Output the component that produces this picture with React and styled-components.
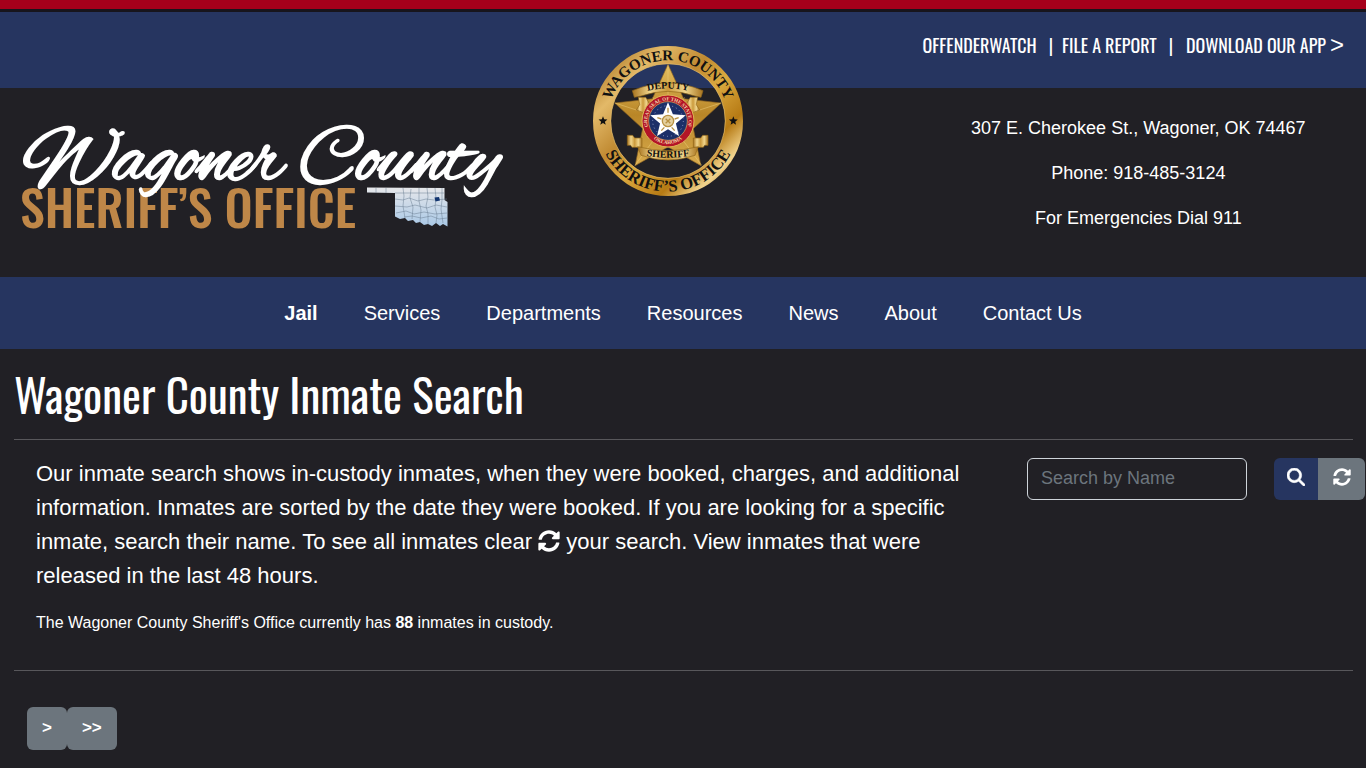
import styled, { createGlobalStyle } from "styled-components";
import { FaSyncAlt } from "react-icons/fa";
import { FaMagnifyingGlass } from "react-icons/fa6";

const GlobalStyle = createGlobalStyle`
  *,
  *::before,
  *::after {
    box-sizing: border-box;
  }

  :root {
    --color-dark: #212025;
    --color-blue: #263560;
    --color-red: #a5001b;
    --color-grey: #6c757d;
    --font-body: "Liberation Sans", Arial, sans-serif;
    --font-heading: Oswald, "Liberation Sans Narrow", "Arial Narrow", sans-serif;
  }

  body {
    margin: 0;
    background-color: var(--color-dark);
    color: #fff;
    font-family: var(--font-body);
    font-size: 16px;
    line-height: 24px;
    overflow-x: hidden;
  }
`;

const TopBar = styled.div`
  display: flex;
  justify-content: flex-end;
  height: 88px;
  padding: 21px 22px 0;
  border-top: 9px solid var(--color-red);
  background-color: var(--color-blue);
  box-shadow: inset 0 3px 0 #17151c;
`;

const TopLinks = styled.nav`
  display: flex;
  font-family: var(--font-heading);
  font-size: 18px;
  font-weight: 400;
  line-height: 30px;
  white-space: nowrap;
`;

const TopLink = styled.a`
  display: flex;
  gap: 4px;
  color: #fff;
  text-decoration: none;
`;

const Separator = styled.span`
  padding: 0 ${(props) => (props.$tight ? 9 : 13)}px 0 12px;
`;

const Chevron = styled.span`
  font-family: var(--font-body);
  font-size: 24px;
`;

const Brand = styled.div`
  display: grid;
  grid-template-columns: repeat(3, minmax(0, 1fr));
  min-height: 189px;
`;

const LogoLink = styled.a`
  padding: 32px 0 0 20px;

  & svg {
    display: block;
    overflow: visible;
  }
`;

const SealCell = styled.div`
  display: flex;
  justify-content: center;
  padding-right: 30px;

  & svg {
    margin-top: -42px;
  }
`;

const Contact = styled.address`
  padding-top: 25px;
  font-size: 18px;
  font-style: normal;
  line-height: 30px;
  text-align: center;

  & p {
    margin: 0 0 15px;
  }
`;

const MainNav = styled.nav`
  background-color: var(--color-blue);

  & ul {
    display: flex;
    flex-wrap: wrap;
    justify-content: center;
    gap: 0 46px;
    margin: 0;
    padding: 21px 0;
    list-style: none;
  }
`;

const NavLink = styled.a`
  color: #fff;
  font-size: 20px;
  font-weight: ${(props) => (props.$active ? 700 : 400)};
  line-height: 30px;
  text-decoration: none;
`;

const Title = styled.h1`
  margin: 0;
  padding: 16px 14px;
  font-family: var(--font-heading);
  font-size: 45px;
  font-weight: 400;
  line-height: 58px;
`;

const Divider = styled.hr`
  height: 1px;
  margin: 0 13px 0 14px;
  border: 0;
  background-color: #58575b;
`;

const SearchRow = styled.div`
  display: grid;
  grid-template-columns: minmax(0, 1fr) 339px;
  padding: 17px 0 35px;
`;

const Intro = styled.div`
  padding: 0 42px 0 36px;
`;

const Lead = styled.p`
  margin: 0 0 18px;
  font-size: 22px;
  line-height: 34px;

  & svg {
    vertical-align: -3px;
  }
`;

const Count = styled.p`
  margin: 0;
`;

const SearchForm = styled.form`
  display: flex;
  align-items: flex-start;
  padding: 1px 1px 0 0;
`;

const SearchInput = styled.input`
  flex: 1;
  min-width: 0;
  height: 42px;
  margin-right: 27px;
  padding: 0 13px 2px;
  border: 1px solid #ced4da;
  border-radius: 6px;
  background-color: var(--color-dark);
  color: #fff;
  font-family: inherit;
  font-size: 18px;

  &::placeholder {
    color: var(--color-grey);
    opacity: 1;
  }
`;

const IconButton = styled.button`
  display: flex;
  justify-content: center;
  width: ${(props) => (props.$secondary ? 47 : 44)}px;
  height: 42px;
  padding: 10px 0 0;
  border: 0;
  border-radius: ${(props) =>
    props.$secondary ? "0 6px 6px 0" : "6px 0 0 6px"};
  background-color: ${(props) =>
    props.$secondary ? "var(--color-grey)" : "var(--color-blue)"};
  color: #fff;
  font-size: 18px;
`;

const Pager = styled.div`
  display: flex;
  padding: 36px 27px 18px;
`;

const PageButton = styled.button`
  height: 43px;
  padding: 0 15px 2px;
  border: 0;
  border-radius: 6px;
  background-color: var(--color-grey);
  color: #fff;
  font-family: inherit;
  font-size: 17px;
  font-weight: 700;
  line-height: 24px;
`;

const navItems = [
  "Jail",
  "Services",
  "Departments",
  "Resources",
  "News",
  "About",
  "Contact Us",
];

function star(cx, cy, outer, inner) {
  return Array.from({ length: 10 }, (_, i) => {
    const r = i % 2 ? inner : outer;
    const a = (Math.PI / 5) * i - Math.PI / 2;
    return `${(cx + r * Math.cos(a)).toFixed(1)},${(cy + r * Math.sin(a)).toFixed(1)}`;
  }).join(" ");
}

function Logo() {
  return (
    <svg
      width="484"
      height="120"
      viewBox="20 120 484 120"
      role="img"
      aria-label="Wagoner County Sheriff's Office"
    >
      <defs>
        <linearGradient id="state" x1="0" y1="0" x2="0" y2="1">
          <stop offset="0" stopColor="#e6e7ea" />
          <stop offset="1" stopColor="#a9c8e6" />
        </linearGradient>
      </defs>
      <text
        x="20"
        y="228"
        fill="#bf8748"
        fontFamily="Oswald, 'Liberation Sans Narrow', sans-serif"
        fontSize="50"
        fontWeight="500"
      >
        SHERIFF’S OFFICE
      </text>
      <path
        d="M367 187.500 L444.500 188 V200 L447.500 202 V226.500 L443 224 L440 226 L436 223 L432 226 L428 224 L424 225 L420 222 L416 223 L413 220 L408 221 L405 218 L400 219 L395 216.500 V193 L367 192.500 Z"
        fill="url(#state)"
      />
      <path
        d="M376 188v5M386 188v5M395 193h49M395 199l8 1 6-2 9 3 8-2 8 1 13-1M395 206l12 1 8-2 12 3 9-3 11 2M396 213l10-2 8 3 10-2 11 2 12-1M403 188l1 8-1 10 2 12M411 189l-1 9 3 9-1 12M419 188v13l2 9-1 12M427 188l1 9-2 9 2 8v10M435 188l1 10-1 9 2 8-1 8M442 188v12l-1 9 2 14M404 217l8-1 9 2 10-2 8 3 8-1"
        fill="none"
        stroke="#6b7f92"
        strokeWidth="0.500"
      />
      <path d="M434.500 197.500l4.500-0.500 1 3.500-4.500 1z" fill="#12356f" />
      <text
        x="23"
        y="179"
        fill="#fff"
        fontFamily="'Alex Brush', 'Liberation Serif', cursive"
        fontSize="80"
        fontWeight="700"
      >
        Wagoner County
      </text>
    </svg>
  );
}

function Seal() {
  return (
    <svg
      width="150"
      height="150"
      viewBox="24 24 450 450"
      role="img"
      aria-label="Wagoner County Sheriff's Office badge"
    >
      <defs>
        <linearGradient id="ring" x1="0" y1="0" x2="1" y2="1">
          <stop offset="0" stopColor="#a8721f" />
          <stop offset="0.200" stopColor="#e3b968" />
          <stop offset="0.400" stopColor="#c08a32" />
          <stop offset="0.550" stopColor="#dba93f" />
          <stop offset="0.750" stopColor="#b67a14" />
          <stop offset="0.880" stopColor="#f2d48e" />
          <stop offset="1" stopColor="#a56c12" />
        </linearGradient>
        <linearGradient id="gold" x1="0" y1="0" x2="0" y2="1">
          <stop offset="0" stopColor="#e3bd5e" />
          <stop offset="0.500" stopColor="#b98627" />
          <stop offset="1" stopColor="#d8ab4d" />
        </linearGradient>
        <linearGradient id="scroll" x1="0" y1="0" x2="1" y2="0">
          <stop offset="0" stopColor="#a8741f" />
          <stop offset="0.250" stopColor="#f0d58c" />
          <stop offset="0.500" stopColor="#cb9a3c" />
          <stop offset="0.750" stopColor="#f0d58c" />
          <stop offset="1" stopColor="#a8741f" />
        </linearGradient>
        <path id="arcTop" d="M67 249 A182 182 0 0 1 431 249" />
        <path id="arcBottom" d="M37 249 A212 212 0 0 0 461 249" />
        <path id="arcDeputy" d="M160 166 Q249 138 338 166" />
        <path id="arcSheriff" d="M160 350 Q249 368 338 350" />
        <path id="sealTop" d="M193 276 A62 62 0 1 1 305 276" />
        <path id="sealBottom" d="M180 249 A69 69 0 0 0 318 249" />
      </defs>
      <circle cx="249" cy="249" r="198" fill="none" stroke="url(#ring)" strokeWidth="54" />
      <circle cx="249" cy="249" r="172" fill="none" stroke="#e4bd6b" strokeWidth="2" />
      <g fill="#111" fontFamily="'Liberation Serif', serif" fontWeight="700" textAnchor="middle">
        <text fontSize="45">
          <textPath href="#arcTop" startOffset="50%">
            WAGONER COUNTY
          </textPath>
        </text>
        <text fontSize="50">
          <textPath href="#arcBottom" startOffset="50%">
            SHERIFF’S OFFICE
          </textPath>
        </text>
      </g>
      <polygon points={star(54, 249, 14, 6)} fill="#111" />
      <polygon points={star(445, 249, 14, 6)} fill="#111" />

      <polygon
        points={star(249, 247, 168, 80)}
        fill="url(#gold)"
        stroke="#8c6220"
        strokeWidth="2"
      />
      <path
        d="M249 80V247L299 178M408 195L249 247 324 272M350 382L249 247V320M150 382L249 247 176 272M90 195L249 247 204 178"
        fill="none"
        stroke="#f0d27f"
        strokeWidth="2"
        opacity="0.700"
      />
      <g fill="url(#scroll)" stroke="#916719" strokeWidth="2">
        <path d="M160 178h22l12 20-18 26-22-8 10-16z" />
        <path d="M338 178h-22l-12 20 18 26 22-8-10-16z" />
        <path d="M142 158 Q249 112 354 158 L348 178 L330 174 Q249 146 168 174 L148 178Z" />
        <path d="M127 292h16l6 8h22v28h-30l-4-6h-10z" />
        <path d="M369 292h-16l-6 8h-22v28h30l4-6h10z" />
        <path d="M158 326 Q249 350 340 326 L330 352 Q249 380 168 352Z" />
      </g>
      <g fill="#111" fontFamily="'Liberation Serif', serif" fontWeight="700" textAnchor="middle">
        <text fontSize="30">
          <textPath href="#arcDeputy" startOffset="50%">
            DEPUTY
          </textPath>
        </text>
        <text fontSize="30">
          <textPath href="#arcSheriff" startOffset="50%">
            SHERIFF
          </textPath>
        </text>
      </g>
      <circle cx="249" cy="249" r="78" fill="#b31527" stroke="#dfb557" strokeWidth="3" />
      <circle cx="249" cy="249" r="58" fill="#1c2f68" stroke="#d9b45d" strokeWidth="2" />
      <circle
        cx="249"
        cy="249"
        r="46"
        fill="none"
        stroke="#8f9cc4"
        strokeWidth="3"
        strokeDasharray="3 9"
      />
      <polygon points={star(249, 249, 56, 25)} fill="#fff" />
      <g fill="none" stroke="#b99243" strokeWidth="4">
        <circle cx="249" cy="249" r="17" fill="#e5d1a0" />
        <path d="M242 242l14 14M256 242l-14 14M249 209v15M217 239l12 4M281 239l-12 4M229 278l9-10M269 278l-9-10" />
      </g>
      <g
        fill="#f4dcae"
        fontFamily="'Liberation Serif', serif"
        fontWeight="700"
        textAnchor="middle"
      >
        <text fontSize="15">
          <textPath href="#sealTop" startOffset="50%">
            GREAT SEAL OF THE STATE OF
          </textPath>
        </text>
        <text fontSize="15">
          <textPath href="#sealBottom" startOffset="50%">
            OKLAHOMA
          </textPath>
        </text>
      </g>
    </svg>
  );
}

function Header() {
  return (
    <header>
      <TopBar>
        <TopLinks aria-label="Quick links">
          <TopLink href="#offenderwatch">OFFENDERWATCH</TopLink>
          <Separator $tight>|</Separator>
          <TopLink href="#report">FILE A REPORT</TopLink>
          <Separator>|</Separator>
          <TopLink href="#app">
            DOWNLOAD OUR APP <Chevron>&gt;</Chevron>
          </TopLink>
        </TopLinks>
      </TopBar>
      <Brand>
        <LogoLink href="#home">
          <Logo />
        </LogoLink>
        <SealCell>
          <Seal />
        </SealCell>
        <Contact>
          <p>307 E. Cherokee St., Wagoner, OK 74467</p>
          <p>Phone: 918-485-3124</p>
          <p>For Emergencies Dial 911</p>
        </Contact>
      </Brand>
      <MainNav aria-label="Main">
        <ul>
          {navItems.map((item) => (
            <li key={item}>
              <NavLink href="#" $active={item === "Jail"}>
                {item}
              </NavLink>
            </li>
          ))}
        </ul>
      </MainNav>
    </header>
  );
}

function InmateSearch() {
  return (
    <main>
      <Title>Wagoner County Inmate Search</Title>
      <Divider />
      <SearchRow>
        <Intro>
          <Lead>
            Our inmate search shows in-custody inmates, when they were booked,
            charges, and additional information. Inmates are sorted by the date
            they were booked. If you are looking for a specific inmate, search
            their name. To see all inmates clear <FaSyncAlt /> your search. View
            inmates that were released in the last 48 hours.
          </Lead>
          <Count>
            The Wagoner County Sheriff's Office currently has <b>88</b> inmates
            in custody.
          </Count>
        </Intro>
        <SearchForm onSubmit={(e) => e.preventDefault()}>
          <SearchInput
            type="text"
            placeholder="Search by Name"
            aria-label="Search by Name"
          />
          <IconButton type="submit" aria-label="Search">
            <FaMagnifyingGlass stroke="currentColor" strokeWidth={16} />
          </IconButton>
          <IconButton type="reset" $secondary aria-label="Clear search">
            <FaSyncAlt />
          </IconButton>
        </SearchForm>
      </SearchRow>
      <Divider />
      <Pager>
        <PageButton type="button">&gt;</PageButton>
        <PageButton type="button">&gt;&gt;</PageButton>
      </Pager>
    </main>
  );
}

export default function App() {
  return (
    <>
      <GlobalStyle />
      <Header />
      <InmateSearch />
    </>
  );
}
